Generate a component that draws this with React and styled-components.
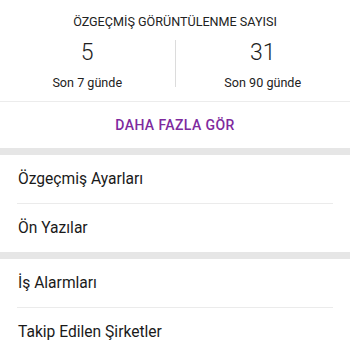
import React from "react";
import styled, { createGlobalStyle } from "styled-components";

const Global = createGlobalStyle`
  html, body { margin: 0; padding: 0; background: #ffffff; }
  body { font-family: Roboto, "Noto Sans", "Liberation Sans", sans-serif; -webkit-font-smoothing: antialiased; }
`;

const Page = styled.div`
  width: 350px;
  display: flex;
  flex-direction: column;
  background: #fff;
`;

const StatsCard = styled.section`
  display: flex;
  flex-direction: column;
  padding-top: 14px;
  border-bottom: 1px solid #ececec;
`;

const Title = styled.div`
  font-size: 12.6px;
  line-height: 16px;
  color: #222;
  text-align: center;
`;

const StatsRow = styled.div`
  margin-top: 10px;
  padding-bottom: 10px;
  display: grid;
  grid-template-columns: 1fr 1px 1fr;
  align-items: start;
`;

const Stat = styled.div`
  display: flex;
  flex-direction: column;
  align-items: center;
`;

const Number = styled.div`
  font-size: 23px;
  font-weight: 300;
  line-height: 26px;
  color: #1e1e1e;
`;

const Label = styled.div`
  margin-top: 9px;
  font-size: 12.6px;
  line-height: 16px;
  color: #222;
`;

const VDivider = styled.div`
  width: 1px;
  height: 47px;
  background: #dcdcdc;
`;

const MoreButton = styled.button`
  height: 46px;
  border: none;
  background: transparent;
  font-family: inherit;
  font-size: 14px;
  font-weight: 500;
  letter-spacing: 0.4px;
  color: #7e2a9e;
  display: flex;
  align-items: center;
  justify-content: center;
  padding: 0;
`;

const Band = styled.div`
  height: 7px;
  background: #e6e6e6;
`;

const Group = styled.div`
  display: flex;
  flex-direction: column;
`;

const Item = styled.div`
  height: 48px;
  line-height: 48px;
  padding-left: 18px;
  font-size: 15.6px;
  color: #1a1a1a;
`;

const HDivider = styled.div`
  height: 1px;
  margin: 0 17px;
  background: #ebebeb;
`;

const groups = [
  ["Özgeçmiş Ayarları", "Ön Yazılar"],
  ["İş Alarmları", "Takip Edilen Şirketler"],
];

export default function App() {
  return (
    <Page>
      <Global />
      <StatsCard>
        <Title>ÖZGEÇMİŞ GÖRÜNTÜLENME SAYISI</Title>
        <StatsRow>
          <Stat>
            <Number>5</Number>
            <Label>Son 7 günde</Label>
          </Stat>
          <VDivider />
          <Stat>
            <Number>31</Number>
            <Label>Son 90 günde</Label>
          </Stat>
        </StatsRow>
      </StatsCard>
      <MoreButton>DAHA FAZLA GÖR</MoreButton>
      {groups.map((g, gi) => (
        <React.Fragment key={gi}>
          <Band />
          <Group>
            {g.map((t, i) => (
              <React.Fragment key={t}>
                {i > 0 && <HDivider />}
                <Item>{t}</Item>
              </React.Fragment>
            ))}
          </Group>
        </React.Fragment>
      ))}
    </Page>
  );
}
